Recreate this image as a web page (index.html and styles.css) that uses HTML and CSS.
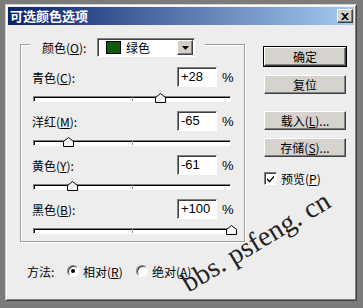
FILE: index.html
```html
<!DOCTYPE html>
<html>
<head>
<meta charset="utf-8">
<link rel="stylesheet" href="styles.css">
</head>
<body>
<div class="dialog">
  <div class="titlebar">
    <span class="title">可选颜色选项</span>
    <span class="close"><svg width="8" height="7" viewBox="0 0 8 7"><path d="M0 0h2l2 2 2-2h2L5 3.5 8 7H6L4 5 2 7H0l3-3.5z" fill="#000"/></svg></span>
  </div>
  <div class="content">
    <div class="main">
      <div class="group">
        <div class="ghead">
          <span class="glabel">颜色(<u>O</u>):</span>
          <div class="select">
            <span class="swatch"></span>
            <span class="selval">绿色</span>
            <span class="arrow"><svg width="7" height="4" viewBox="0 0 7 4"><path d="M0 0h7L3.5 4z" fill="#000"/></svg></span>
          </div>
        </div>
        <div class="rows">
          <div class="row">
            <div class="rtop"><span class="rlabel">青色(<u>C</u>):</span><span class="input">+28</span><span class="pct">%</span></div>
            <div class="track"><span class="tick"></span><svg class="thumb" style="left:121px" width="11" height="10" viewBox="0 0 11 10"><path d="M0.5 4.5 L5.5 0.5 L10.5 4.5 V9.5 H0.5 Z" fill="#f4f4f4" stroke="#000"/></svg></div>
          </div>
          <div class="row">
            <div class="rtop"><span class="rlabel">洋红(<u>M</u>):</span><span class="input">-65</span><span class="pct">%</span></div>
            <div class="track"><span class="tick"></span><svg class="thumb" style="left:29px" width="11" height="10" viewBox="0 0 11 10"><path d="M0.5 4.5 L5.5 0.5 L10.5 4.5 V9.5 H0.5 Z" fill="#f4f4f4" stroke="#000"/></svg></div>
          </div>
          <div class="row">
            <div class="rtop"><span class="rlabel">黄色(<u>Y</u>):</span><span class="input">-61</span><span class="pct">%</span></div>
            <div class="track"><span class="tick"></span><svg class="thumb" style="left:33px" width="11" height="10" viewBox="0 0 11 10"><path d="M0.5 4.5 L5.5 0.5 L10.5 4.5 V9.5 H0.5 Z" fill="#f4f4f4" stroke="#000"/></svg></div>
          </div>
          <div class="row">
            <div class="rtop"><span class="rlabel">黑色(<u>B</u>):</span><span class="input">+100</span><span class="pct">%</span></div>
            <div class="track"><span class="tick"></span><svg class="thumb" style="left:192px" width="11" height="10" viewBox="0 0 11 10"><path d="M0.5 4.5 L5.5 0.5 L10.5 4.5 V9.5 H0.5 Z" fill="#f4f4f4" stroke="#000"/></svg></div>
          </div>
        </div>
      </div>
      <div class="side">
        <div class="btn default b1">确定</div>
        <div class="btn b2">复位</div>
        <div class="btn b3">载入(<u>L</u>)...</div>
        <div class="btn b4">存储(<u>S</u>)...</div>
        <div class="check"><span class="cbox"><svg width="9" height="9" viewBox="0 0 9 9"><path d="M1 4 L3.5 6.5 L8 1.5 V3.5 L3.5 8.5 L1 6 Z" fill="#000"/></svg></span><span class="clabel">预览(<u>P</u>)</span></div>
      </div>
    </div>
    <div class="method">
      <span class="mlabel">方法:</span>
      <span class="radio on"><span class="dot"></span></span>
      <span class="rtext">相对(<u>R</u>)</span>
      <span class="radio r2"></span>
      <span class="rtext">绝对(<u>A</u>)</span>
    </div>
    <span class="watermark">bbs. psfeng. cn</span>
  </div>
</div>
</body>
</html>
```
FILE: styles.css
```css
* { box-sizing: border-box; }
html, body { margin: 0; padding: 0; }
body {
  background: #7b7b7b;
  width: 363px;
  height: 308px;
  overflow: hidden;
  font-family: "Noto Sans CJK SC", "Liberation Sans", sans-serif;
  font-size: 12px;
  color: #000;
}
u { text-decoration: underline; text-underline-offset: 1px; }
.dialog {
  margin: 4px 0 0 5px;
  width: 352px;
  height: 297px;
  background: #ededed;
  border: 1px solid;
  border-color: #d4d0c8 #404040 #404040 #d4d0c8;
  box-shadow: inset 1px 1px #fff, inset -1px -1px #808080;
  padding: 2px;
  position: relative;
}
.titlebar {
  height: 18px;
  background: linear-gradient(to right, #0a246a, #a6caf0);
  display: flex;
  align-items: center;
  justify-content: space-between;
  padding: 0 1px 0 2px;
}
.title {
  color: #fff;
  font-weight: bold;
  font-size: 13px;
  line-height: 18px;
}
.close {
  width: 16px;
  height: 14px;
  background: #d4d0c8;
  border: 1px solid;
  border-color: #fff #404040 #404040 #fff;
  box-shadow: inset -1px -1px #808080;
  display: flex;
  align-items: center;
  justify-content: center;
}
.content { position: relative; height: 273px; }
.main {
  display: flex;
  padding-left: 12px;
  padding-top: 19px;
}
.group {
  width: 225px;
  height: 198px;
  border: 1px solid #9c9c9c;
  box-shadow: inset 1px 1px #fff, 1px 1px #fff;
}
.ghead {
  margin-top: -7px;
  margin-left: 9px;
  padding: 0 10px 0 12px;
  height: 19px;
  width: max-content;
  display: flex;
  align-items: center;
  background: #ededed;
}
.glabel { width: 55px; }
.select {
  width: 98px;
  height: 19px;
  background: #fff;
  border: 1px solid;
  border-color: #808080 #fff #fff #808080;
  box-shadow: inset 1px 1px #404040;
  display: flex;
  align-items: center;
  padding: 1px 1px 1px 8px;
}
.swatch {
  width: 15px;
  height: 13px;
  background: #0c5c0c;
  border: 1px solid #000;
}
.selval { margin-left: 5px; flex: 1; }
.arrow {
  width: 16px;
  height: 15px;
  background: #d4d0c8;
  border: 1px solid;
  border-color: #fff #404040 #404040 #fff;
  box-shadow: inset -1px -1px #808080;
  display: flex;
  align-items: center;
  justify-content: center;
}
.rows { padding-left: 11px; margin-top: 10px; }
.row { height: 44px; }
.rtop { display: flex; align-items: center; height: 20px; }
.rlabel { width: 145px; }
.input {
  width: 40px;
  height: 20px;
  background: #fff;
  border: 1px solid;
  border-color: #808080 #fff #fff #808080;
  box-shadow: inset 1px 1px #404040;
  font-family: "Liberation Sans", sans-serif;
  font-size: 13px;
  line-height: 18px;
  padding-left: 3px;
}
.pct { margin-left: 5px; font-family: "Liberation Sans", sans-serif; font-size: 13px; }
.track {
  position: relative;
  margin-top: 9px;
  margin-left: 1px;
  width: 198px;
  height: 6px;
  background: #fff;
  border: 1px solid;
  border-color: #808080 #fff #fff #808080;
  box-shadow: inset 1px 1px #000;
}
.tick {
  position: absolute;
  left: 98px;
  top: 0;
  width: 1px;
  height: 4px;
  background: #909090;
}
.thumb { position: absolute; top: -4px; }
.side {
  margin-left: 19px;
  width: 82px;
  display: flex;
  flex-direction: column;
}
.btn {
  height: 19px;
  background: #d6d3ce;
  border: 1px solid;
  border-color: #fff #404040 #404040 #fff;
  box-shadow: inset -1px -1px #808080;
  display: flex;
  align-items: center;
  justify-content: center;
  line-height: 1;
}
.btn.default { box-shadow: 0 0 0 1px #000, inset -1px -1px #808080; }
.b1 { margin-top: 3px; }
.b2 { margin-top: 9px; }
.b3 { margin-top: 17px; }
.b4 { margin-top: 8px; }
.check { margin-top: 15px; display: flex; align-items: center; height: 13px; }
.cbox {
  width: 13px;
  height: 13px;
  background: #fff;
  border: 1px solid;
  border-color: #808080 #fff #fff #808080;
  box-shadow: inset 1px 1px #404040;
  display: flex;
  align-items: center;
  justify-content: center;
}
.clabel { margin-left: 4px; }
.method {
  display: flex;
  align-items: center;
  height: 16px;
  margin-top: 21px;
  padding-left: 19px;
}
.mlabel { width: 40px; }
.radio {
  width: 12px;
  height: 12px;
  border-radius: 50%;
  background: #fff;
  border: 1px solid;
  border-color: #808080 #fff #fff #808080;
  box-shadow: inset 1px 1px #404040;
  display: flex;
  align-items: center;
  justify-content: center;
}
.dot { width: 4px; height: 4px; border-radius: 50%; background: #000; }
.rtext { margin-left: 4px; width: 53px; }
.watermark {
  position: absolute;
  left: 183px;
  top: 244px;
  font-family: "Liberation Serif", serif;
  font-size: 28px;
  line-height: 1;
  color: #222;
  white-space: nowrap;
  transform: rotate(-31deg);
  transform-origin: 0 100%;
}
```
